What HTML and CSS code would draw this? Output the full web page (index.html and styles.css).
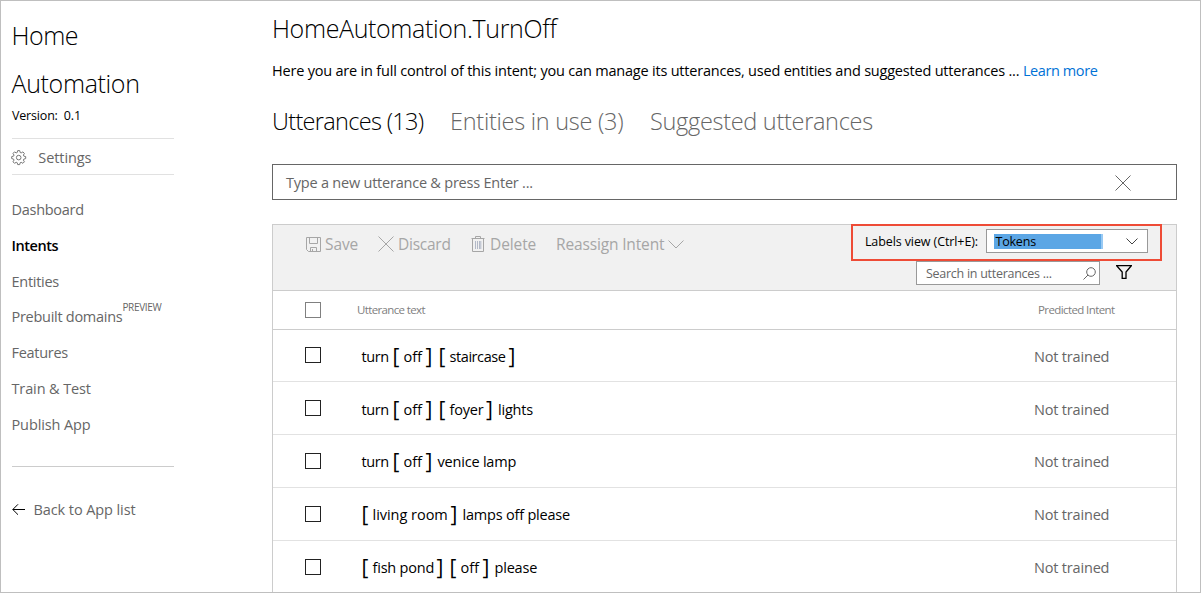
FILE: index.html
```html
<!DOCTYPE html>
<html lang="en">
<head>
<meta charset="utf-8">
<title>HomeAutomation.TurnOff</title>
<link rel="stylesheet" href="styles.css">
</head>
<body>
<div class="page">
  <aside class="sidebar">
    <h1 class="app-name"><span class="home">Home</span><br>Automation</h1>
    <div class="version">Version: &nbsp;0.1</div>
    <div class="settings">
      <svg class="gear" width="16" height="16" viewBox="0 0 16 16"><path d="M6.7.6h2l.5 1.9 1 .4 1.7-1 1.5 1.5-1 1.7.4 1 1.9.5v2l-1.9.5-.4 1 1 1.7-1.5 1.5-1.7-1-1 .4-.5 1.9h-2l-.5-1.9-1-.4-1.7 1L2 11.8l1-1.7-.4-1L.7 8.600v-2l1.9-.5.4-1-1-1.7 1.5-1.5 1.7 1 1-.4z"/><circle cx="7.7" cy="7.6" r="2.3"/></svg>
      <span>Settings</span>
    </div>
    <nav class="nav">
      <a>Dashboard</a>
      <a class="active">Intents</a>
      <a>Entities</a>
      <a class="prebuilt">Prebuilt domains<sup>PREVIEW</sup></a>
      <a>Features</a>
      <a class="loose">Train &amp; Test</a>
      <a class="loose">Publish App</a>
    </nav>
    <div class="back">
      <svg width="14" height="12" viewBox="0 0 14 12"><path d="M.7 5.5H13M6 .3L.8 5.5 6 10.7"/></svg>
      <span>Back to App list</span>
    </div>
  </aside>
  <main class="main">
    <h2 class="title">HomeAutomation.TurnOff</h2>
    <p class="desc">Here you are in full control of this intent; you can manage its utterances, used entities and suggested utterances ... <a>Learn more</a></p>
    <div class="tabs">
      <span class="tab current">Utterances (13)</span>
      <span class="tab entities">Entities in use (3)</span>
      <span class="tab">Suggested utterances</span>
    </div>
    <div class="new-utterance">
      <span>Type a new utterance &amp; press Enter ...</span>
      <svg width="16" height="16" viewBox="0 0 16 16"><path d="M.5.5l15 15M15.5.5l-15 15"/></svg>
    </div>
    <section class="panel">
      <div class="toolbar">
        <div class="actions">
          <span class="action save"><svg width="15" height="15" viewBox="0 0 15 15"><path d="M.5.5h14v14h-12l-2-2zM3.5.5v6h8v-6M4.5 14.5v-4h6v4M6.5 12v2.5"/></svg>Save</span>
          <span class="action discard"><svg width="16" height="16" viewBox="0 0 16 16"><path d="M.5.5l15 15M15.5.5l-15 15"/></svg>Discard</span>
          <span class="action delete"><svg width="14" height="16" viewBox="0 0 14 16"><path d="M.5 2.5h13M4.5 2.5v-2h5v2M1.5 2.5v13h11v-13"/><path class="can" d="M4.5 5v8M6.5 5v8M8.5 5v8M9.8 5v8"/></svg>Delete</span>
          <span class="action reassign">Reassign Intent<svg width="16" height="9" viewBox="0 0 16 9"><path d="M.5.5L8 8 15.5.5"/></svg></span>
        </div>
        <div class="filters">
          <div class="view-row">
            <span class="view-label">Labels view (Ctrl+E):</span>
            <div class="select"><span class="selected">Tokens</span><svg width="12" height="7" viewBox="0 0 12 7"><path d="M.5.5L6 6 11.5.5"/></svg></div>
          </div>
          <div class="search-row">
            <div class="search"><span>Search in utterances ...</span><svg width="13" height="13" viewBox="0 0 13 13"><circle cx="8" cy="5" r="4.3"/><path d="M5 8L.5 12.5"/></svg></div>
            <svg class="funnel" width="16" height="14" viewBox="0 0 16 14"><path d="M.7.7h14.6L10 7v6.3H6.2V7z"/></svg>
          </div>
        </div>
        <div class="highlight"></div>
      </div>
      <div class="row head"><i class="box"></i><span class="col-text">Utterance text</span><span class="col-intent">Predicted Intent</span></div>
      <div class="row first"><i class="box"></i><div class="utterance"><span class="w-turn">turn</span><span class="token"><b>[</b><span class="w-off">off</span><b>]</b></span><span class="token"><b>[</b><span class="w-stair">staircase</span><b>]</b></span></div><span class="intent">Not trained</span></div>
      <div class="row second"><i class="box"></i><div class="utterance"><span class="w-turn">turn</span><span class="token"><b>[</b><span class="w-off">off</span><b>]</b></span><span class="token"><b>[</b><span class="w-foyer">foyer</span><b>]</b></span><span class="w-text">lights</span></div><span class="intent">Not trained</span></div>
      <div class="row"><i class="box"></i><div class="utterance"><span class="w-turn">turn</span><span class="token"><b>[</b><span class="w-off">off</span><b>]</b></span><span class="w-text">venice lamp</span></div><span class="intent">Not trained</span></div>
      <div class="row"><i class="box"></i><div class="utterance lead"><span class="token"><b>[</b><span class="w-living">living room</span><b>]</b></span><span class="w-text">lamps off please</span></div><span class="intent">Not trained</span></div>
      <div class="row last"><i class="box"></i><div class="utterance lead"><span class="token"><b>[</b><span class="w-fish">fish pond</span><b>]</b></span><span class="token"><b>[</b><span class="w-off">off</span><b>]</b></span><span class="w-text">please</span></div><span class="intent">Not trained</span></div>
    </section>
  </main>
</div>
</body>
</html>
```
FILE: styles.css
```css
* { box-sizing: border-box; }
html, body { margin: 0; height: 100%; overflow: hidden; }
body { font: 14.5px "Open Sans", "Noto Sans", sans-serif; color: #000; background: #fff; }
svg { display: block; flex: none; fill: none; stroke: currentColor; }
span, a { white-space: nowrap; }

.page { display: flex; width: 1201px; height: 593px; border: 1px solid #bfbfbf; overflow: hidden; }

.sidebar { width: 173px; margin-right: 98px; padding: 10px 0 0 11px; flex: none; color: #666; }
.app-name { margin: 0 0 0 -.5px; font-size: 25px; font-weight: 300; line-height: 48px; letter-spacing: -.35px; color: #000; }
.home { letter-spacing: -.5px; }
.version { padding-top: 1px; font-size: 12.5px; line-height: 16px; letter-spacing: -.18px; color: #000; }
.settings { display: flex; align-items: center; gap: 11px; height: 37px; margin-top: 14px; padding-top: 2px; border: solid #e1e1e1; border-width: 1px 0; letter-spacing: -.08px; }
.gear { color: #777; margin-left: -.7px; }
.nav { display: flex; flex-direction: column; padding: 17px 0 23px; border-bottom: 1px solid #ccc; line-height: 36px; letter-spacing: -.28px; }
.nav a { margin-left: -.5px; }
.nav .active { color: #000; font-weight: 600; letter-spacing: -.45px; }
.nav .loose { letter-spacing: -.12px; }
.nav .prebuilt { display: flex; height: 36px; margin-top: -1px; }
.prebuilt sup { font-size: 10px; line-height: 17px; letter-spacing: -.33px; }
.back { display: flex; align-items: center; gap: 8px; margin: 33px 0 0 -.5px; line-height: 20px; letter-spacing: -.09px; }
.back svg { color: #000; }

.main { width: 905px; flex: none; display: flex; flex-direction: column; }
.main > * { flex: none; }
.title { margin: 9px 0 0; font-size: 25px; font-weight: 300; line-height: 36px; letter-spacing: -.36px; }
.desc { margin: 15px 0 0; line-height: 20px; letter-spacing: -.2px; white-space: nowrap; }
.desc a { color: #0072d6; letter-spacing: -.4px; }
.tabs { display: flex; margin-top: 24px; font-size: 23.5px; font-weight: 300; line-height: 32px; color: #666; }
.tab { letter-spacing: -.3px; }
.tab.current { width: 178px; color: #000; letter-spacing: -.68px; }
.tab.entities { width: 200px; letter-spacing: -.27px; }
.new-utterance { display: flex; align-items: center; justify-content: space-between; height: 36px; margin-top: 27px; padding: 2px 45px 0 13px; border: 1px solid #666; color: #666; letter-spacing: -.22px; }
.new-utterance span { padding-bottom: 2px; }

.panel { height: 400px; margin-top: 24px; border: 1px solid #ccc; border-bottom: 0; }
.toolbar { position: relative; display: flex; justify-content: space-between; height: 66px; padding-right: 28px; background: #f1f1f1; border-bottom: 1px solid #ccc; }
.actions { display: flex; align-items: center; height: 38px; padding-left: 33px; font-size: 15.5px; color: #a6a6a6; }
.action { display: flex; align-items: center; }
.save { width: 72px; gap: 4px; letter-spacing: -.1px; }
.discard { width: 93px; gap: 4px; letter-spacing: -.25px; }
.delete { width: 85px; gap: 5px; letter-spacing: -.1px; }
.can { stroke: #b3b9c8; }
.reassign { gap: 4px; letter-spacing: -.15px; }
.filters { display: flex; flex-direction: column; gap: 8px; padding-top: 4px; font-size: 12.5px; }
.view-row { display: flex; align-items: center; gap: 8px; }
.select { display: flex; align-items: center; justify-content: space-between; width: 162px; height: 24px; padding: 0 9px 0 7px; border: 1px solid #999; background: #fff; }
.selected { width: 109px; height: 15px; line-height: 15px; background: #5ba6e5; border: solid #98c9f3; border-width: 0 2px 0 0; padding-left: 1.5px; letter-spacing: -.2px; }
.view-label { padding-top: 1px; letter-spacing: -.1px; }
.select svg { color: #444; }
.search-row { display: flex; align-items: center; justify-content: flex-end; gap: 16px; padding-right: 16px; }
.search { display: flex; align-items: center; justify-content: space-between; width: 184px; height: 24px; padding: 0 3px 0 9px; border: 1px solid #999; background: #fff; color: #666; letter-spacing: -.27px; }
.search span { padding-top: 1px; }
.funnel { stroke-width: 1.3; margin-bottom: 2px; }
.highlight { position: absolute; left: 578px; top: -1px; width: 311px; height: 37px; border: 2px solid #ee4b36; }

.row { display: grid; grid-template-columns: 88px 1fr 142px; align-items: center; height: 53px; padding-top: 3px; border-bottom: 1px solid #e2e2e2; }
.row > .utterance, .row > .intent { margin-top: -2px; }
.row.head { height: 39px; padding-top: 0; border-color: #ccc; font-size: 11.5px; color: #808080; grid-template-columns: 84px 1fr 138px; }
.row.first { height: 52px; padding-top: 2px; }
.row.first > .utterance, .row.first > .intent, .row.second > .utterance, .row.second > .intent { margin-top: 0; }
.row.last { border-bottom: 0; padding-top: 2px; }
.box { width: 16px; height: 16px; margin-left: 32px; margin-top: -3px; border: 1px solid #222; background: #fff; }
.head .box { margin-top: 0; border-color: #808080; }
.head span { padding-bottom: 2px; }
.col-text { letter-spacing: -.64px; }
.col-intent { letter-spacing: -.6px; }
.intent { color: #666; letter-spacing: -.18px; }
.utterance { display: flex; align-items: center; padding-left: .5px; letter-spacing: -.2px; }
.utterance.lead { padding-left: 1.5px; }
.token { display: flex; align-items: center; margin-right: 8px; }
.token b { width: 5px; font-size: 21px; font-weight: 400; line-height: 24px; letter-spacing: 0; display: flex; justify-content: center; margin-top: -2px; }
.token > span { margin-left: 5px; }
.w-turn { width: 32px; letter-spacing: -.4px; }
.w-off { width: 23px; letter-spacing: 0; }
.w-stair { width: 60px; letter-spacing: -.42px; }
.w-foyer { width: 37.5px; }
.w-living { width: 79px; letter-spacing: -.03px; }
.w-fish { width: 65px; letter-spacing: -.2px; }
.w-text { margin-left: -2px; }
```
